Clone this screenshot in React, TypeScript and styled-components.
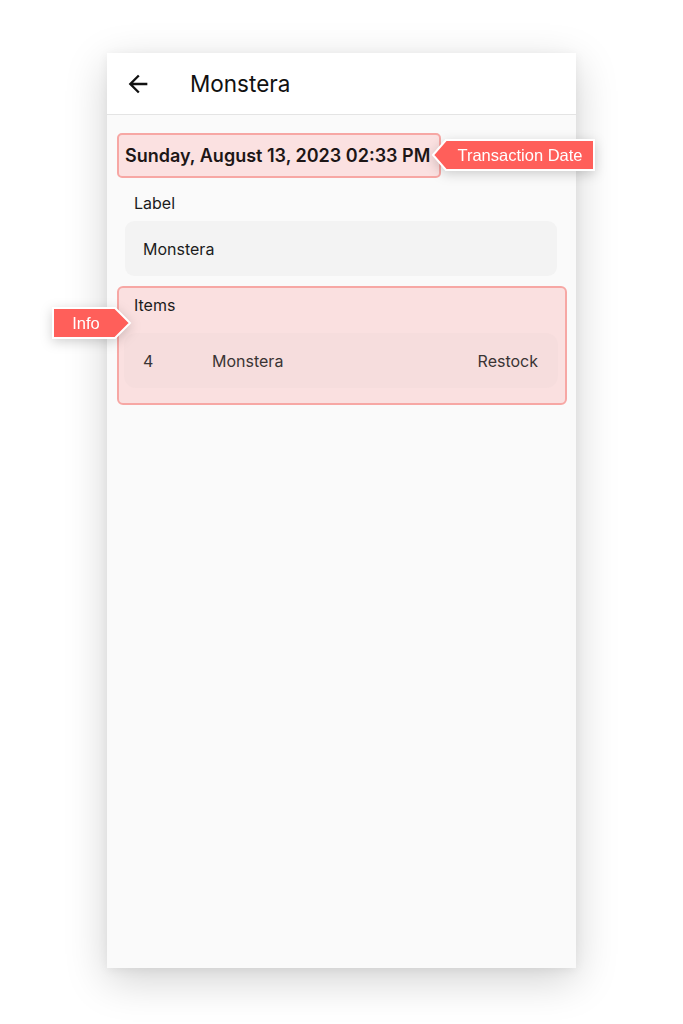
import styled, { createGlobalStyle } from "styled-components"

const GlobalStyle = createGlobalStyle`
	body {
		margin: 0;
		background: #ffffff;
		font-family: Inter, "Noto Sans", sans-serif;
	}
`

const App = () => {
	return (
		<Stage>
			<GlobalStyle />
			<Phone>
				<Header>
					<BackButton>
						<svg width="28" height="28" viewBox="0 0 24 24">
							<path d="M20 11H7.83l5.59-5.59L12 4l-8 8 8 8 1.41-1.41L7.83 13H20v-2z" fill="#111" />
						</svg>
					</BackButton>
					<Title>Monstera</Title>
				</Header>
				<Content>
					<DateBox>
						Sunday, August 13, 2023 02:33 PM
						<Callout style={{ left: "calc(100% - 8px)", top: 4 }}>
							<CalloutShape width="164" height="32" viewBox="0 0 164 32">
								<polygon points="2,16 15,1 163,1 163,31 15,31" />
							</CalloutShape>
							<CalloutText $pad="0 0 0 14px">Transaction Date</CalloutText>
						</Callout>
					</DateBox>
					<FieldLabel>Label</FieldLabel>
					<Input>Monstera</Input>
					<ItemsBox>
						<FieldLabel $tight>Items</FieldLabel>
						<Callout style={{ left: -67, top: 19 }}>
							<CalloutShape width="80" height="32" viewBox="0 0 80 32">
								<polygon points="1,1 63,1 78,16 63,31 1,31" />
							</CalloutShape>
							<CalloutText $pad="0 12px 0 0">Info</CalloutText>
						</Callout>
						<ItemRow>
							<Qty>4</Qty>
							<ItemName>Monstera</ItemName>
							<ItemType>Restock</ItemType>
						</ItemRow>
					</ItemsBox>
				</Content>
			</Phone>
		</Stage>
	)
}

export default App

const Stage = styled.div`
	display: flex;
	justify-content: center;
	padding-top: 53px;
	height: 1024px;
	box-sizing: border-box;
`

const Phone = styled.div`
	position: relative;
	width: 469px;
	height: 915px;
	background: #fafafa;
	box-shadow: 0 12px 40px rgba(0, 0, 0, 0.18), 0 2px 10px rgba(0, 0, 0, 0.06);
`

const Header = styled.div`
	display: flex;
	align-items: center;
	height: 61px;
	background: #ffffff;
	border-bottom: 1px solid #e4e4e4;
	padding-left: 17px;
`

const BackButton = styled.div`
	display: flex;
	width: 28px;
	height: 28px;
`

const Title = styled.h1`
	margin: 0 0 0 38px;
	font-size: 22.5px;
	font-weight: 400;
	color: #111111;
`

const Content = styled.div`
	display: flex;
	flex-direction: column;
	align-items: flex-start;
	padding: 18px 9px 0 10px;
`

const DateBox = styled.div`
	position: relative;
	box-sizing: border-box;
	width: 324px;
	height: 45px;
	display: flex;
	align-items: center;
	padding-left: 6px;
	background: #fbe1e1;
	border: 2px solid #f7a7a4;
	border-radius: 5px;
	font-size: 18px;
	font-weight: 600;
	color: #1d1616;
	white-space: nowrap;
`

const FieldLabel = styled.div<{ $tight?: boolean }>`
	margin: ${(p) => (p.$tight ? "7px 0 0 15px" : "15px 0 0 17px")};
	font-size: 16px;
	line-height: 20px;
	color: #1c1c1c;
`

const Input = styled.div`
	box-sizing: border-box;
	margin: 8px 0 0 8px;
	width: 432px;
	height: 55px;
	display: flex;
	align-items: center;
	padding-left: 18px;
	background: #f3f3f3;
	border-radius: 9px;
	font-size: 16px;
	color: #1c1c1c;
`

const ItemsBox = styled.div`
	position: relative;
	box-sizing: border-box;
	margin-top: 10px;
	width: 450px;
	height: 119px;
	background: #fae0e0;
	border: 2px solid #f7a7a4;
	border-radius: 6px;
`

const ItemRow = styled.div`
	box-sizing: border-box;
	display: flex;
	align-items: center;
	margin: 18px 0 0 5px;
	width: 434px;
	height: 55px;
	padding: 0 20px 0 19px;
	background: #f6dddd;
	border-radius: 12px;
	font-size: 16px;
	color: #3a3434;
`

const Qty = styled.span`
	width: 69px;
`

const ItemName = styled.span`
	flex: 1;
`

const ItemType = styled.span``

const Callout = styled.div`
	position: absolute;
	height: 32px;
	display: flex;
	align-items: center;
	filter: drop-shadow(0 3px 6px rgba(0, 0, 0, 0.18));
	z-index: 2;
`

const CalloutShape = styled.svg`
	display: block;

	polygon {
		fill: #ff5f5a;
		stroke: #ffffff;
		stroke-width: 2;
		stroke-linejoin: miter;
	}
`

const CalloutText = styled.span<{ $pad: string }>`
	position: absolute;
	inset: 0;
	display: flex;
	align-items: center;
	justify-content: center;
	padding: ${(p) => p.$pad};
	font-family: "Liberation Sans", Arial, sans-serif;
	font-size: 16.5px;
	font-weight: 400;
	color: #ffffff;
	white-space: nowrap;
`
